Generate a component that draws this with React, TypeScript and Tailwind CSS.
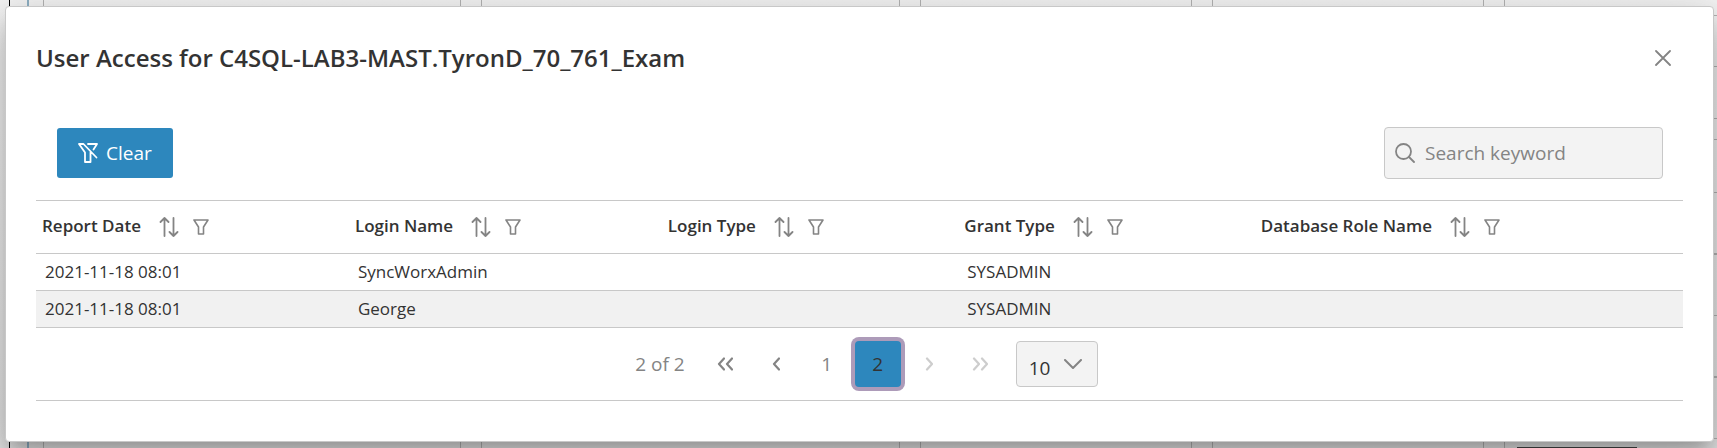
import React from "react";

const columns = ["Report Date", "Login Name", "Login Type", "Grant Type", "Database Role Name"];
const widths = ["w-[19%]", "w-[19%]", "w-[18%]", "w-[18%]", "w-[26%]"];
const rows = [
  ["2021-11-18 08:01", "SyncWorxAdmin", "", "SYSADMIN", ""],
  ["2021-11-18 08:01", "George", "", "SYSADMIN", ""],
];

function Icon({ className, children, box = "0 0 20 20" }: { className: string; children: React.ReactNode; box?: string }) {
  return (
    <svg viewBox={box} className={className} fill="none" stroke="currentColor" aria-hidden="true">
      {children}
    </svg>
  );
}

function SortIcon() {
  return (
    <Icon className="h-5 w-5">
      <g strokeWidth="1.8" strokeLinecap="round" strokeLinejoin="round">
        <path d="M5.5 19V1M1.5 5l4-4 4 4" />
        <path d="M14.5 1v18M10.5 15l4 4 4-4" />
      </g>
    </Icon>
  );
}

function FilterIcon() {
  return (
    <Icon className="h-4 w-4" box="0 0 16 16">
      <path strokeWidth="1.6" strokeLinejoin="round" d="M1 1h14l-4.5 7v7h-5V8z" />
    </Icon>
  );
}

function FilterSlashIcon() {
  return (
    <Icon className="h-5 w-5">
      <g strokeWidth="1.8" strokeLinecap="round" strokeLinejoin="round">
        <path d="M10 1h9l-3.5 5.5" />
        <path d="M18.5 14.5L5.5 1H1l6 8.5V19h5.5V9.5" />
      </g>
    </Icon>
  );
}

function Chevron({ dir, double }: { dir: "left" | "right"; double?: boolean }) {
  const d = dir === "left" ? "M7 1.5L2 7l5 5.5" : "M2 1.5L7 7l-5 5.5";
  return (
    <span className="flex">
      <Icon className="h-3.5 w-2" box="0 0 8 14">
        <path strokeWidth="2.2" strokeLinecap="round" strokeLinejoin="round" d={d} />
      </Icon>
      {double && (
        <Icon className="h-3.5 w-2" box="0 0 8 14">
          <path strokeWidth="2.2" strokeLinecap="round" strokeLinejoin="round" d={d} />
        </Icon>
      )}
    </span>
  );
}

function Backdrop() {
  return (
    <div className="absolute inset-0 flex bg-linear-to-b from-[#f4f4f4] to-[#e6e6e6]" aria-hidden="true">
      <div className="ml-[9px] w-5 border-l border-black border-r-2 border-r-[#8fb0c4]" />
      <div className="ml-3.5 w-[418px] border-x border-[#b4b4b4]" />
      <div className="ml-5 w-[419px] border-x border-[#b4b4b4]" />
      <div className="ml-5 w-[272px] border-x border-[#b4b4b4]" />
      <div className="ml-5 w-[272px] border-x border-[#b4b4b4]" />
      <div className="ml-5 flex flex-1 flex-col border-l border-[#b4b4b4]">
        <div className="h-4 border-b border-[#b4b4b4]" />
        <div className="h-[51px] border-b border-[#b4b4b4]" />
        <div className="h-[52px] border-b border-[#b4b4b4]" />
        <div className="h-[21px] border-b border-[#b4b4b4]" />
        <div className="h-[53px] border-b border-[#b4b4b4]" />
        <div className="h-[62px] border-b-2 border-[#b4b4b4]" />
        <div className="h-[61px] border-b border-[#b4b4b4]" />
        <div className="h-[62px] border-b-2 border-[#b4b4b4]" />
        <div className="h-[61px] border-b border-[#b4b4b4]" />
        <div className="mt-auto ml-3 h-px w-[120px] bg-[#444]" />
      </div>
    </div>
  );
}

const pageButton = "flex h-[46px] w-[46px] items-center justify-center rounded-[4px] text-[19px] text-[#848484] disabled:opacity-40";

export default function App() {
  return (
    <div className="relative min-h-screen overflow-hidden pt-1.5 pr-[3px] pb-1.5 pl-[5px] font-['Open_Sans','Noto_Sans',sans-serif] text-[#333]">
      <Backdrop />
      <div
        role="dialog"
        aria-labelledby="dialog-title"
        className="relative rounded-[4px] border border-[#c8c8c8] bg-white px-[30px] pb-10 shadow-[0_11px_15px_-7px_rgba(0,0,0,0.2),0_24px_38px_3px_rgba(0,0,0,0.14),0_9px_46px_8px_rgba(0,0,0,0.12)]"
      >
        <header className="flex h-[102px] items-center justify-between pr-1">
          <h2 id="dialog-title" className="text-[24px] leading-8 font-[550]">
            User Access for C4SQL-LAB3-MAST.TyronD_70_761_Exam
          </h2>
          <button aria-label="Close" className="p-2 text-[#848484]">
            <Icon className="h-4 w-4" box="0 0 16 16">
              <path strokeWidth="1.8" strokeLinecap="round" d="M1 1l14 14M15 1L1 15" />
            </Icon>
          </button>
        </header>
        <div className="flex items-center justify-between pt-[18px] pr-5 pb-[21px] pl-[21px]">
          <button className="flex h-[50px] items-center gap-2 rounded-[3px] bg-[#2d87bd] px-[21px] text-[19px] text-white">
            <FilterSlashIcon />
            Clear
          </button>
          <label className="flex h-[52px] w-[279px] items-center gap-2.5 rounded-[4px] border border-[#c8c8c8] bg-[#f3f3f3] px-2.5 text-[#848484]">
            <Icon className="h-5 w-5 shrink-0">
              <g strokeWidth="1.8" strokeLinecap="round">
                <circle cx="8.5" cy="8.5" r="7.5" />
                <path d="M14 14l5 5" />
              </g>
            </Icon>
            <input
              type="text"
              aria-label="Search keyword"
              placeholder="Search keyword"
              className="w-full min-w-0 bg-transparent text-[19px] outline-none placeholder:text-[#848484]"
            />
          </label>
        </div>
        <table className="w-full table-fixed border-collapse border-t border-[#c8c8c8] text-left">
          <thead>
            <tr className="h-[53px] border-b border-[#c8c8c8]">
              {columns.map((name, i) => (
                <th key={name} scope="col" className={`${widths[i]} px-1.5 font-[550]`}>
                  <div className="flex items-center text-[17px] leading-6">
                    <span className="pb-0.5">{name}</span>
                    <button aria-label={`Sort by ${name}`} className="ml-[18px] text-[#848484]"><SortIcon /></button>
                    <button aria-label={`Filter by ${name}`} className="ml-3.5 text-[#848484]"><FilterIcon /></button>
                  </div>
                </th>
              ))}
            </tr>
          </thead>
          <tbody>
            {rows.map((row) => (
              <tr key={row[1]} className="h-[37px] border-b border-[#c8c8c8] text-[17px] even:bg-[#f1f1f1]">
                {row.map((cell, i) => (
                  <td key={columns[i]} className="px-[9px] leading-6">{cell}</td>
                ))}
              </tr>
            ))}
          </tbody>
        </table>
        <nav aria-label="Pagination" className="flex h-[73px] items-center justify-center gap-[5px] border-b border-[#c8c8c8] pl-3.5">
          <span className="mr-3 text-[19px] text-[#848484]">2 of 2</span>
          <button aria-label="First page" className={pageButton}><Chevron dir="left" double /></button>
          <button aria-label="Previous page" className={pageButton}><Chevron dir="left" /></button>
          <button className={pageButton}>1</button>
          <button aria-current="page" className="flex h-[46px] w-[46px] items-center justify-center rounded-[4px] bg-[#2d87bd] text-[19px] shadow-[0_0_0_4px_#ad9bb9]">2</button>
          <button disabled aria-label="Next page" className={pageButton}><Chevron dir="right" /></button>
          <button disabled aria-label="Last page" className={pageButton}><Chevron dir="right" double /></button>
          <div className="relative ml-2">
            <select aria-label="Rows per page" defaultValue="10" className="h-[46px] w-[82px] appearance-none rounded-[4px] border border-[#c8c8c8] bg-[#f3f3f3] pt-2 pl-3 text-[19px]">
              <option>10</option>
              <option>20</option>
            </select>
            <Icon className="pointer-events-none absolute top-[18px] right-4 h-2.5 w-[18px] text-[#848484]" box="0 0 18 10">
              <path strokeWidth="2" strokeLinecap="round" strokeLinejoin="round" d="M1 1l8 8 8-8" />
            </Icon>
          </div>
        </nav>
      </div>
    </div>
  );
}
